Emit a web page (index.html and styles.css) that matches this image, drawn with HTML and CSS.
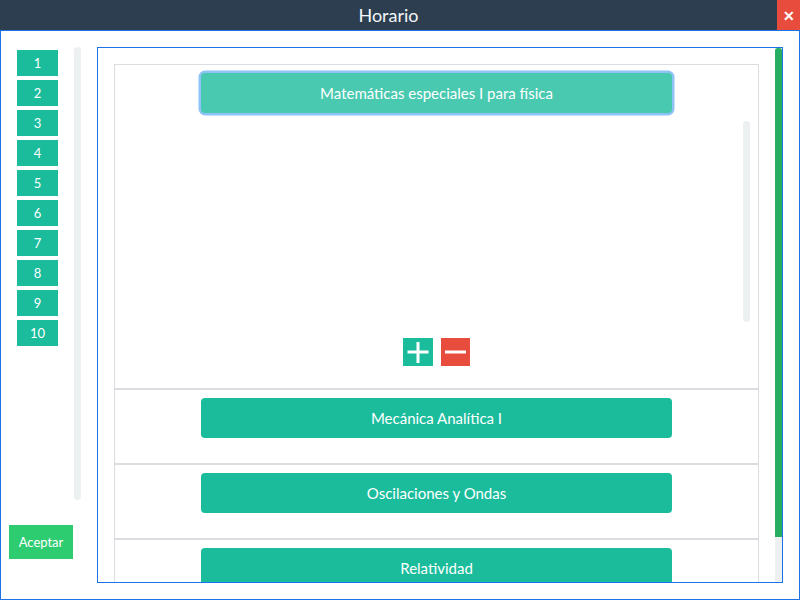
FILE: index.html
```html
<!DOCTYPE html>
<html lang="es">
<head>
<meta charset="utf-8">
<title>Horario</title>
<link rel="stylesheet" href="styles.css">
</head>
<body>
<div class="titlebar">
  <span class="title">Horario</span>
  <div class="close">✕</div>
</div>
<div class="window">
  <div class="side">
    <div class="side-top">
      <div class="nums">
        <div class="num">1</div>
        <div class="num">2</div>
        <div class="num">3</div>
        <div class="num">4</div>
        <div class="num">5</div>
        <div class="num">6</div>
        <div class="num">7</div>
        <div class="num">8</div>
        <div class="num">9</div>
        <div class="num">10</div>
      </div>
      <div class="track"></div>
    </div>
    <button class="accept">Aceptar</button>
  </div>
  <div class="panel">
    <div class="panel-content">
      <div class="list">
        <div class="item item-open">
          <div class="course focus">Matemáticas especiales I para física</div>
          <div class="sched"><div class="sched-track"></div></div>
          <div class="actions">
            <div class="act plus"><svg width="30" height="28" viewBox="0 0 30 28"><rect x="4.5" y="12.5" width="21" height="3" fill="#fff"/><rect x="13.5" y="4" width="3" height="21" fill="#fff"/></svg></div>
            <div class="act minus"><svg width="29" height="28" viewBox="0 0 29 28"><rect x="4" y="12.5" width="21" height="3" fill="#fff"/></svg></div>
          </div>
        </div>
        <div class="item"><div class="course">Mecánica Analítica I</div></div>
        <div class="item"><div class="course">Oscilaciones y Ondas</div></div>
        <div class="item"><div class="course">Relatividad</div></div>
      </div>
    </div>
    <div class="vscroll"><div class="thumb"></div></div>
  </div>
</div>
</body>
</html>
```
FILE: styles.css
```css
html, body {
  margin: 0;
  padding: 0;
}
body {
  width: 800px;
  height: 600px;
  overflow: hidden;
  font-family: Lato, "Open Sans", sans-serif;
  background: #fff;
}
.titlebar {
  box-sizing: border-box;
  height: 30px;
  padding-right: 23px;
  background: #2c3e50;
  position: relative;
  display: flex;
  align-items: center;
  justify-content: center;
}
.title {
  color: #f4f6f8;
  font-size: 18px;
  line-height: 30px;
}
.close {
  position: absolute;
  right: 0;
  top: 0;
  width: 23px;
  height: 30px;
  background: #e74c3c;
  color: #fff;
  font-size: 14px;
  font-weight: bold;
  display: flex;
  align-items: center;
  justify-content: center;
}
.window {
  box-sizing: border-box;
  height: 570px;
  border: 1px solid #1a73e8;
  display: flex;
}
.side {
  width: 96px;
  padding-top: 16px;
  display: flex;
  flex-direction: column;
  align-items: flex-start;
}
.side-top {
  display: flex;
}
.nums {
  margin-left: 16px;
  margin-top: 3px;
  width: 41px;
  display: flex;
  flex-direction: column;
  gap: 4px;
}
.num {
  height: 26px;
  background: #1abc9c;
  color: #fff;
  font-size: 13px;
  display: flex;
  align-items: center;
  justify-content: center;
}
.track {
  margin-left: 16px;
  width: 7px;
  height: 453px;
  background: #ecf0f1;
  border-radius: 4px;
}
.accept {
  margin-top: 25px;
  margin-left: 8px;
  width: 64px;
  height: 34px;
  border: none;
  padding: 0;
  background: #2ecc71;
  color: #fff;
  font-family: Lato, sans-serif;
  font-size: 13px;
}
.panel {
  box-sizing: border-box;
  margin-top: 16px;
  width: 686px;
  height: 536px;
  border: 1px solid #1a73e8;
  display: flex;
  overflow: hidden;
}
.panel-content {
  flex: 1;
  padding: 16px 0 0 16px;
  overflow: hidden;
}
.list {
  width: 645px;
}
.item {
  border: 1px solid #dcdde1;
  padding: 8px 0 25px;
}
.item-open {
  padding-bottom: 22px;
}
.course {
  width: 471px;
  height: 40px;
  margin: 0 auto;
  border-radius: 4px;
  background: #1abc9c;
  color: #fff;
  font-size: 15px;
  display: flex;
  align-items: center;
  justify-content: center;
}
.course.focus {
  background: #48c9b0;
  box-shadow: 0 0 0 2.5px #8fc3f7;
}
.sched {
  margin-top: 8px;
  height: 201px;
  display: flex;
  justify-content: flex-end;
  padding-right: 8px;
}
.sched-track {
  width: 7px;
  height: 201px;
  background: #ecf0f1;
  border-radius: 4px;
}
.actions {
  margin-top: 16px;
  display: flex;
  justify-content: center;
  gap: 8px;
}
.act {
  width: 29px;
  height: 28px;
}
.act svg {
  display: block;
}
.plus {
  width: 30px;
  background: #1abc9c;
}
.minus {
  background: #e74c3c;
}
.vscroll {
  width: 7px;
  background: #ecf0f1;
  display: flex;
  flex-direction: column;
}
.thumb {
  height: 489px;
  background: #27ae60;
  border-radius: 3px 3px 0 0;
}
```
